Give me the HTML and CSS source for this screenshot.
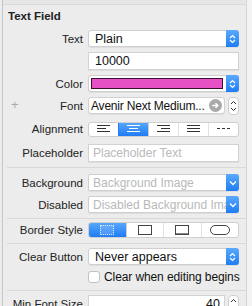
FILE: index.html
```html
<!DOCTYPE html>
<html lang="en">
<head>
    <meta charset="UTF-8">
    <title>Attributes Inspector - Text Field</title>
    <link rel="stylesheet" href="styles.css">
</head>
<body>
    <div class="inspector">
        <div class="panel">
            <div class="topbar"></div>
            <div class="title">Text Field</div>

            <div class="row r-text">
                <span class="label">Text</span>
                <div class="popup"><span class="val">Plain</span><span class="chev blue">
                    <svg width="7" height="10" viewBox="0 0 7 10"><path d="M1 4 L3.5 1.5 L6 4 M1 6 L3.5 8.5 L6 6" fill="none" stroke="#fff" stroke-width="1.2"/></svg></span></div>
            </div>
            <div class="row r-value">
                <span class="label"></span>
                <div class="field"><span class="val">10000</span></div>
            </div>
            <div class="row r-color">
                <span class="label">Color</span>
                <div class="popup color"><span class="swatch"></span><span class="chev blue">
                    <svg width="7" height="10" viewBox="0 0 7 10"><path d="M1 4 L3.5 1.5 L6 4 M1 6 L3.5 8.5 L6 6" fill="none" stroke="#fff" stroke-width="1.2"/></svg></span></div>
            </div>
            <div class="row r-font">
                <span class="plus">+</span>
                <span class="label">Font</span>
                <div class="field font"><span class="val">Avenir Next Medium...</span>
                    <svg class="goto" width="13" height="13" viewBox="0 0 14 14"><circle cx="7" cy="7" r="7" fill="#a9a9a9"/><path d="M3.5 7 H9 M7 4.5 L9.5 7 L7 9.5" fill="none" stroke="#fff" stroke-width="1.6"/></svg>
                </div>
                <span class="stepper">
                    <svg width="9" height="16" viewBox="0 0 9 16"><path d="M2 6 L4.5 3.5 L7 6 M2 10 L4.5 12.5 L7 10" fill="none" stroke="#333" stroke-width="1"/></svg>
                </span>
            </div>
            <div class="row r-align">
                <span class="label">Alignment</span>
                <div class="segments five">
                    <span class="seg"><svg width="13" height="8" viewBox="0 0 13 8"><path d="M0 .5 H13 M0 3.5 H9 M0 6.5 H13" stroke="#333"/></svg></span>
                    <span class="seg on"><svg width="13" height="8" viewBox="0 0 13 8"><path d="M0 .5 H13 M2 3.5 H11 M0 6.5 H13" stroke="#fff"/></svg></span>
                    <span class="seg"><svg width="13" height="8" viewBox="0 0 13 8"><path d="M0 .5 H13 M4 3.5 H13 M0 6.5 H13" stroke="#333"/></svg></span>
                    <span class="seg"><svg width="13" height="8" viewBox="0 0 13 8"><path d="M0 .5 H13 M0 3.5 H13 M0 6.5 H13" stroke="#333"/></svg></span>
                    <span class="seg"><svg width="13" height="8" viewBox="0 0 13 8"><path d="M0 3.5 H3 M5 3.5 H8 M10 3.5 H13" stroke="#333"/></svg></span>
                </div>
            </div>
            <div class="row r-placeholder">
                <span class="label">Placeholder</span>
                <div class="field"><span class="val hint">Placeholder Text</span></div>
            </div>

            <div class="sep s1"></div>

            <div class="row r-bg">
                <span class="label">Background</span>
                <div class="popup combo"><span class="val hint">Background Image</span><span class="chev blue">
                    <svg width="8" height="6" viewBox="0 0 8 6"><path d="M1 1.5 L4 4.5 L7 1.5" fill="none" stroke="#fff" stroke-width="1.3"/></svg></span></div>
            </div>
            <div class="row r-disabled">
                <span class="label">Disabled</span>
                <div class="popup combo"><span class="val hint">Disabled Background Image</span><span class="chev blue">
                    <svg width="8" height="6" viewBox="0 0 8 6"><path d="M1 1.5 L4 4.5 L7 1.5" fill="none" stroke="#fff" stroke-width="1.3"/></svg></span></div>
            </div>

            <div class="sep s2"></div>

            <div class="row r-border">
                <span class="label">Border Style</span>
                <div class="segments four">
                    <span class="seg on"><span class="box dotted"></span></span>
                    <span class="seg"><span class="box line"></span></span>
                    <span class="seg"><span class="box bezel"></span></span>
                    <span class="seg"><span class="box round"></span></span>
                </div>
            </div>

            <div class="sep s3"></div>

            <div class="row r-clear">
                <span class="label">Clear Button</span>
                <div class="popup"><span class="val">Never appears</span><span class="chev blue">
                    <svg width="7" height="10" viewBox="0 0 7 10"><path d="M1 4 L3.5 1.5 L6 4 M1 6 L3.5 8.5 L6 6" fill="none" stroke="#fff" stroke-width="1.2"/></svg></span></div>
            </div>
            <div class="row r-check">
                <span class="label"></span>
                <span class="checkbox"></span>
                <span class="check-text">Clear when editing begins</span>
            </div>

            <div class="sep s4"></div>

            <div class="row r-min">
                <span class="label">Min Font Size</span>
                <div class="field num"><span class="val">40</span></div>
                <span class="stepper">
                    <svg width="9" height="16" viewBox="0 0 9 16"><path d="M2 6 L4.5 3.5 L7 6 M2 10 L4.5 12.5 L7 10" fill="none" stroke="#333" stroke-width="1"/></svg>
                </span>
            </div>
        </div>
        <div class="scroller"></div>
    </div>
</body>
</html>
```
FILE: styles.css
```css
body { margin: 0; background: #ececec; font-family: "Liberation Sans", Arial, sans-serif; font-size: 11.5px; color: #1a1a1a; }
.inspector { display: flex; width: 252px; height: 306px; overflow: hidden; padding-left: 2px; box-sizing: border-box; }
.panel { flex: 1; border-left: 1px solid #c6c6c6; background: #ececec; }
.scroller { width: 5px; border-left: 1px solid #d6d6d6; background: #f3f3f3; }

.topbar { height: 4px; border-bottom: 1px solid #d9d9d9; background: #e6e6e6; }
.title { height: 22px; line-height: 22px; padding-left: 5px; font-weight: bold; font-size: 11.5px; color: #222; margin-bottom: 2px; }

.row { display: flex; align-items: center; position: relative; }
.label { width: 80px; text-align: right; padding-right: 5px; flex: none; color: #222; }
.plus { position: absolute; left: 8px; color: #aaa; font-size: 13px; top: 0; }

.popup, .field { flex: none; width: 151px; height: 17px; box-sizing: border-box; background: #fff; border: 1px solid #cfcfcf; border-radius: 3px; display: flex; align-items: center; box-shadow: 0 1px 0 rgba(0,0,0,0.06); }
.field { border-radius: 0; border-color: #d2d2d2; height: 18px; }
.val { flex: 1; padding-left: 6px; font-size: 12.5px; color: #111; white-space: nowrap; overflow: hidden; }
.val.hint { color: #b9b9b9; font-size: 12px; padding-left: 4px; }
.chev { width: 13px; height: 17px; margin: -1px -1px -1px 0; border-radius: 0 3px 3px 0; display: flex; align-items: center; justify-content: center; flex: none; }
.chev.blue { background: linear-gradient(#5aa9fb, #1f7cf4); }
.popup.combo { border-radius: 2px; }

.r-text { margin-top: 3px; height: 17px; }
.r-value { margin-top: 5px; height: 18px; }
.r-color { margin-top: 5px; height: 17px; }
.popup.color { padding-left: 2px; }
.swatch { flex: 1; height: 9px; margin-right: 3px; background: #e651c6; border: 1px solid #3a1030; }
.r-font { margin-top: 5px; height: 17px; }
.field.font { width: 137px; border-radius: 3px; height: 17px; }
.field.font .val { font-size: 12px; padding-left: 2px; letter-spacing: -0.2px; overflow: visible; }
.goto { margin-right: 2px; flex: none; }
.stepper { width: 11px; height: 18px; margin-left: 3px; background: #fff; border: 1px solid #cfcfcf; border-radius: 4px; box-sizing: border-box; display: flex; align-items: center; justify-content: center; }

.r-align { margin-top: 7px; height: 16px; }
.segments { flex: none; width: 151px; height: 15px; display: flex; background: #fff; border: 1px solid #cfcfcf; border-radius: 3px; box-sizing: border-box; overflow: hidden; }
.seg { flex: 1; display: flex; align-items: center; justify-content: center; border-left: 1px solid #e1e1e1; }
.seg:first-child { border-left: none; }
.seg.on { background: linear-gradient(#57a6fb, #1f7cf4); border-left-color: #1f7cf4; }
.seg.on + .seg { border-left-color: #cfcfcf; }

.r-placeholder { margin-top: 7px; height: 18px; }

.sep { height: 1px; background: #d8d8d8; margin-left: 4px; }
.s1 { margin-top: 5px; }
.r-bg { margin-top: 6px; height: 17px; }
.r-disabled { margin-top: 5px; height: 17px; }
.s2 { margin-top: 5px; }

.r-border { margin-top: 3px; height: 16px; }
.r-border .segments { height: 16px; }
.box { display: block; width: 12px; height: 8px; border: 1px solid #333; }
.box.dotted { border: 1px dotted #d7e8ff; background: rgba(255,255,255,0.15); }
.box.line { border-color: #444; }
.box.bezel { border-color: #444; box-shadow: inset 0 -1px 0 #888; }
.box.round { width: 18px; border-radius: 5px; border-color: #444; }
.s3 { margin-top: 5px; }

.r-clear { margin-top: 4px; height: 17px; }
.r-check { margin-top: 4px; height: 16px; }
.checkbox { width: 12px; height: 12px; border: 1px solid #c2c2c2; border-radius: 3px; background: #fff; flex: none; box-sizing: border-box; }
.check-text { margin-left: 4px; font-size: 12px; letter-spacing: -0.1px; color: #111; white-space: nowrap; }
.s4 { margin-top: 5px; }

.r-min { margin-top: 4px; height: 18px; }
.field.num { width: 137px; }
.field.num .val { text-align: right; padding-right: 4px; }
```
